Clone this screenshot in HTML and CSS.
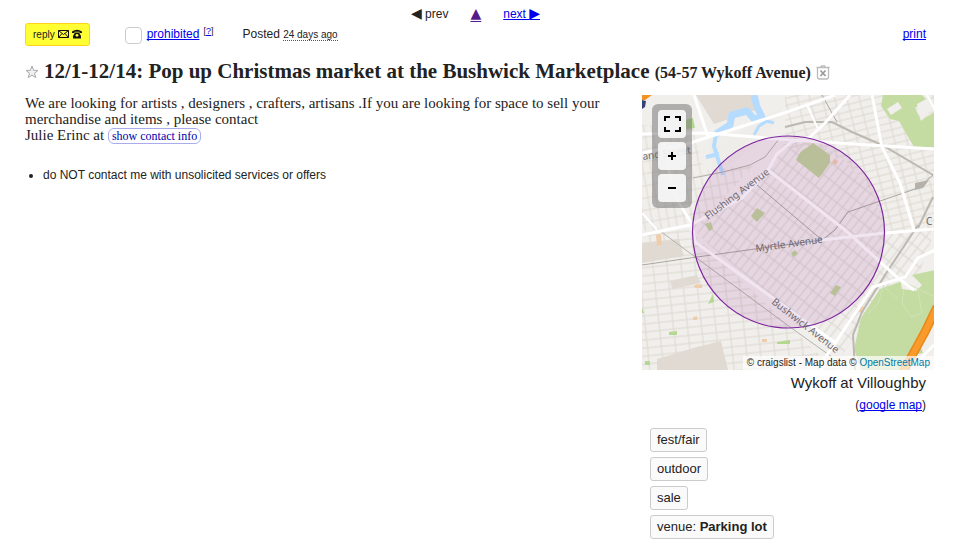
FILE: index.html
```
<!DOCTYPE html>
<html lang="en">

<head>
    <meta charset="utf-8">
    <title>12/1-12/14: Pop up Christmas market at the Bushwick Marketplace</title>
    <link rel="stylesheet" href="styles.css">
</head>

<body>
    <header>
        <nav class="prevnext">
            <span><span class="arrow">◀</span> prev</span>
            <a class="backup" href="#" aria-label="back to list"><span class="arrow">▲</span></a>
            <a href="#">next <span class="arrow">▶</span></a>
        </nav>

        <div class="toolbar">
            <button class="reply" type="button">reply
                <svg width="11" height="8" viewBox="0 0 11 8" aria-hidden="true">
                    <path d="M.5.5h10v7H.5zM.5.5l5 4 5-4M.5 7.5l3.5-4M10.5 7.5L7 3.5" fill="none" stroke="#111" />
                </svg>
                <svg width="10" height="10" viewBox="0 0 10 10" aria-hidden="true">
                    <path d="M0 4V2.500Q5-1 10 2.500V4H7.500V2.800h-5V4zM3 3.500h4L9 7v2.500H1V7z" fill="#111" />
                    <circle cx="5" cy="6.300" r="1.400" fill="#ffff33" />
                </svg>
            </button>
            <div class="flag">
                <input type="checkbox" id="prohibited" aria-label="flag as prohibited">
                <a href="#">prohibited</a>
                <sup>[<a href="#">?</a>]</sup>
            </div>
            <p class="posted">Posted <time>24 days ago</time></p>
            <a class="print" href="#">print</a>
        </div>
    </header>

    <h1 class="title">
        <button class="icon" type="button" aria-label="save">
            <svg width="14" height="14" viewBox="0 0 14 14">
                <path d="M7 1l1.600 4.300 4.400.2-3.500 2.800 1.200 4.400L7 10.200l-3.700 2.500 1.200-4.400L1 5.500l4.400-.2z" fill="#eee" stroke="#aaa" />
            </svg>
        </button>
        <span>12/1-12/14: Pop up Christmas market at the Bushwick Marketplace <small>(54-57 Wykoff Avenue)</small></span>
        <button class="icon" type="button" aria-label="hide">
            <svg width="14" height="15" viewBox="0 0 14 15" fill="none" stroke="#bbb">
                <path d="M.5 2.500h13M4.500 2.500l1-1.700h3l1 1.700M1.500 3v9q0 2 2 2h7q2 0 2-2V3" stroke-width="1.300" />
                <path d="M4.500 5.500l5 5.500M9.500 5.500L4.500 11" stroke="#999" stroke-width="1.700" />
            </svg>
        </button>
    </h1>

    <main class="content">
        <section class="posting">
            <p>We are looking for artists , designers , crafters, artisans .If you are looking for space to sell your merchandise and items , please contact<br>
                Julie Erinc at <a class="showcontact" href="#">show contact info</a></p>
            <ul class="notices">
                <li>do NOT contact me with unsolicited services or offers</li>
            </ul>
        </section>

        <aside>
            <div class="map">
                <svg class="tiles" viewBox="0 0 292 275" role="img" aria-label="Map of Bushwick">
                    <defs>
                        <pattern id="south" width="14" height="8" patternUnits="userSpaceOnUse" patternTransform="rotate(-6)">
                            <path d="M0 4h14M7 0v8" stroke="#dcd8d0" fill="none" />
                        </pattern>
                        <pattern id="bushwick" width="7" height="14" patternUnits="userSpaceOnUse" patternTransform="rotate(38)">
                            <path d="M0 7h7M3 0v14" stroke="#dad6d0" fill="none" />
                        </pattern>
                        <pattern id="north" width="12" height="7" patternUnits="userSpaceOnUse" patternTransform="rotate(-14)">
                            <path d="M0 3h12M6 0v7" stroke="#dcd8cf" fill="none" />
                        </pattern>
                        <pattern id="west" width="8" height="12" patternUnits="userSpaceOnUse" patternTransform="rotate(-10)">
                            <path d="M0 6h8M4 0v12" stroke="#dedad3" fill="none" />
                        </pattern>
                    </defs>

                    <rect width="292" height="275" fill="#f1efec" />
                    <path d="M0 30h50l12 45 50-5-52 57-60 10z" fill="url(#west)" />
                    <path d="M143 0h150v135l-50 3-12-40-30-35-58-12z" fill="url(#north)" />
                    <path d="M0 140l46-6 102 98 45 43H0z" fill="url(#south)" />
                    <path d="M50 132l52-29 24-28 14-25 25-8 36 21 30 35 12 40 50-3-18 50-25 3-50 72-134-111z" fill="url(#bushwick)" />

                    <!-- built-up blocks -->
                    <path d="M54 0h57l3 15-42 14zM0 148l37-4 5 17-42 7zM28 186l27-6 4 8-29 6zM15 264l40-12 24-6 7 29H15z" fill="#e0dad2" />
                    <path d="M67 45l35-10 8-12 30-8-18 30-30 22-22 9z" fill="#efede9" />
                    <path d="M14 140l5-1 1 11-5 1zM52 190l8-1v4h-7zM51 222l4-1v4h-4zM120 244h5v3h-5zM192 64l4 2-2 4-4-2zM219 211l3 1-3 6-3-2z" fill="#f0cdaa" />

                    <!-- parks -->
                    <path d="M241 0h39l5 5-12 8 6 12 14-8v35h-21l-15-26-9-2-9-13z" fill="#c4dba1" />
                    <path d="M245 14l11-7 4 6-11 7zM275 9l13-7 5 10-14 14z" fill="#f1efec" />
                    <path d="M258 187l12-7 23-5v41l-34 59h-40l-7-21 7-31 19-29z" fill="#c4dba1" />
                    <path d="M258 184l12-4 10 10-6 6-14-2z" fill="#f1efec" />
                    <path d="M262 187l31 15M262 194l-2 14 9 14 11-4-4-22M226 218l10-9 6-20M240 190l16 14" fill="none" stroke="#d2e2b8" />
                    <path d="M43 25l8-2 2 10-9 1zM66 209l5-10 1 8zM27 237l8-1v4h-8zM3 266h5v4H3zM135 247l13-2v4h-13zM0 213l2 5H0z" fill="#b4d890" />
                    <path d="M275 254l4-1 2 5-5 1zM154 65q4-10 12-13l5-4 17 12v8l-11 15zM109 121l6-8 8 5-8 9zM149 158l4-3 3 4-5 3zM188 198l6-8 5 2-6 9zM63 129l6-2 2 7-4 2z" fill="#c0d69c" />

                    <!-- creek -->
                    <g fill="none" stroke="#b5dcff" stroke-linejoin="round">
                        <path d="M112 0l3 12 5 10-8 2-7-8-15 4-2 10-14 9" stroke-width="7" />
                        <path d="M74 39l-2 12 3 10 6 19M64 62l13-3" stroke-width="4" />
                        <path d="M112 40l5-9 8-5 7 2" stroke-width="3" />
                    </g>

                    <!-- railways -->
                    <path d="M10 130l138 102 42 30M51 83l30-6 27-7 15-8 14-18" fill="none" stroke="#b5b1ac" />
                    <path d="M143 32l20-5h27l20 10 30 13 51 30M276 130l-33 50-23 37-9 23 2 35M291 102l-15 31" fill="none" stroke="#bcb8b2" stroke-width="2" />
                    <path d="M0 170l55-8 58-8 67-9 13-10 13-18 70-24 15-13M180 0l15 27M180 145l-65-55" fill="none" stroke="#aaa6a2" />
                    <path d="M273 95v-7l14-3-6 8z" fill="#b5b1aa" />

                    <!-- avenues -->
                    <g fill="none" stroke="#fff" stroke-width="3">
                        <path d="M0 39l65-1 83 7 145 9" />
                        <path d="M0 58l48-10 100-32 45-16" />
                        <path d="M52 0l14 42M22 48l9 50 19 31 3 18 78 56 64 46" />
                        <path d="M230 0l10 52 18 36 14 47" />
                        <path d="M0 140l48-10 52-27 26-28 9-16 14-12 19-5 15-14 25-28" />
                        <path d="M126 75l77 60 53 48 16 12M180 145l63-7 50-4" />
                        <path d="M179 275l4-12 48-71 32-10 13-19 17-8M292 250l-20 20" />
                        <path d="M165 10l11 24M0 118l18 20M285 0l8 15" stroke-width="2" />
                    </g>
                    <path d="M295 212l-12 25-22 40" fill="none" stroke="#e88a18" stroke-width="9" />
                    <path d="M295 212l-12 25-22 40" fill="none" stroke="#f99a2b" stroke-width="6" />
                    <path d="M0 0h10L3 5H0z" fill="#f39326" />
                    <path d="M0 5l4 1-1 6-3 2z" fill="#354477" />

                    <circle cx="146.500" cy="137" r="96" fill="#800080" fill-opacity=".1" stroke="#7d26a0" stroke-width="1.200" />

                    <g class="streets">
                        <text transform="translate(66 125) rotate(-37)">Flushing Avenue</text>
                        <text transform="translate(114 157) rotate(-8)">Myrtle Avenue</text>
                        <text transform="translate(129 208) rotate(38)">Bushwick Avenue</text>
                        <text transform="translate(1 65) rotate(-8)">and Street</text>
                        <text x="284" y="130">C</text>
                    </g>
                </svg>
                <div class="controls">
                    <button type="button" aria-label="full screen">
                        <svg width="18" height="16" viewBox="0 0 18 16">
                            <path d="M2 5V1h5M12 1h5v4M17 11v4h-5M7 15H2v-4" fill="none" stroke="#000" stroke-width="2" />
                        </svg>
                    </button>
                    <button type="button" aria-label="zoom in">
                        <svg width="8" height="8" viewBox="0 0 8 8">
                            <path d="M0 4h8M4 0v8" stroke="#000" stroke-width="2" />
                        </svg>
                    </button>
                    <button type="button" aria-label="zoom out">
                        <svg width="8" height="8" viewBox="0 0 8 8">
                            <path d="M0 4h8" stroke="#000" stroke-width="2" />
                        </svg>
                    </button>
                </div>
                <p class="attribution">© craigslist - Map data © <a href="#">OpenStreetMap</a></p>
            </div>
            <p class="address">Wykoff at Villoughby</p>
            <p class="maplink">(<a href="#">google map</a>)</p>
            <ul class="attrs">
                <li>fest/fair</li>
                <li>outdoor</li>
                <li>sale</li>
                <li>venue: <b>Parking lot</b></li>
            </ul>
        </aside>
    </main>
</body>

</html>
```

FILE: styles.css
```
body {
    margin: 0;
    padding: 5px 49px 16px 25px;
    font-family: "Liberation Sans", Arial, sans-serif;
    font-size: 12px;
    color: #222;
    background-color: #fff;
}

a {
    color: #0000ee;
    text-decoration-skip-ink: none;
}

p,
ul {
    margin: 0;
    padding: 0;
}

button {
    font-family: inherit;
    cursor: pointer;
}

.prevnext {
    display: flex;
    justify-content: center;
    gap: 22px;
    line-height: 16px;
}

.arrow {
    font-family: "DejaVu Sans", sans-serif;
    font-size: 14px;
}

.prevnext .backup {
    color: #551a8b;
    text-underline-offset: 3px;
}

.toolbar {
    display: flex;
    align-items: center;
    height: 24px;
}

.reply {
    display: flex;
    align-items: center;
    gap: 3px;
    height: 23px;
    padding: 0 7px;
    font-size: 10px;
    color: #222;
    background-color: #ffff33;
    border: 1px solid #ffd21c;
    border-radius: 3px;
}

.flag {
    display: flex;
    align-items: center;
    margin-left: 35px;
}

.flag input {
    appearance: none;
    width: 17px;
    height: 17px;
    margin: 2px 5px 0 0;
    border: 1px solid #ccc;
    border-radius: 4px;
}

.flag sup {
    margin: 0 0 6px 4px;
    font-size: 9px;
    line-height: 9px;
}

.posted {
    margin-left: 29px;
}

.posted time {
    font-size: 10px;
    border-bottom: 1px dotted #555;
}

.print {
    margin-left: auto;
}

.title {
    display: flex;
    align-items: center;
    gap: 5px;
    margin: 13px 0 10px;
    font-family: "Liberation Serif", "Times New Roman", serif;
    font-size: 21px;
    line-height: 24px;
}

.title small {
    font-size: 16px;
}

.icon {
    display: flex;
    padding: 0;
    background: none;
    border: none;
}

.content {
    display: flex;
    gap: 32px;
}

.posting {
    flex: 1;
    font-family: "Liberation Serif", "Times New Roman", serif;
    font-size: 15px;
    line-height: 16px;
}

.showcontact {
    padding: 0 3px;
    font-size: 12px;
    color: #0000aa;
    text-decoration: none;
    border: 1px solid #aaaaee;
    border-radius: 6px;
}

.notices {
    margin-top: 23px;
    padding-left: 18px;
    font-family: "Liberation Sans", Arial, sans-serif;
    font-size: 12px;
}

aside {
    flex: 0 0 292px;
    margin-right: -8px;
}

.map {
    position: relative;
}

.tiles {
    display: block;
    width: 100%;
}

.streets {
    font-family: "Noto Sans", sans-serif;
    font-size: 10px;
    fill: #6d6870;
}

.controls {
    position: absolute;
    top: 9px;
    left: 10px;
    display: flex;
    flex-direction: column;
    gap: 4px;
    padding: 6px;
    background-color: rgba(110, 110, 110, 0.5);
    border-radius: 6px;
}

.controls button {
    display: flex;
    align-items: center;
    justify-content: center;
    width: 28px;
    height: 28px;
    padding: 0;
    background-color: rgba(255, 255, 255, 0.85);
    border: none;
    border-radius: 4px;
}

.attribution {
    position: absolute;
    right: 0;
    bottom: 0;
    padding: 0 4px;
    font-size: 10px;
    line-height: 14px;
    background-color: rgba(255, 255, 255, 0.7);
}

.attribution a {
    color: #0078a8;
    text-decoration: none;
}

.address,
.maplink {
    padding-right: 8px;
    text-align: right;
}

.address {
    margin-top: 4px;
    font-size: 15px;
    line-height: 18px;
}

.maplink {
    margin-top: 4px;
    line-height: 18px;
}

.attrs {
    display: flex;
    flex-direction: column;
    align-items: flex-start;
    gap: 5px;
    margin: 14px 0 0 8px;
    font-size: 13px;
    list-style: none;
}

.attrs li {
    padding: 0 6px;
    line-height: 22px;
    background-color: #fafafa;
    border: 1px solid #ccc;
    border-radius: 3px;
}
```
